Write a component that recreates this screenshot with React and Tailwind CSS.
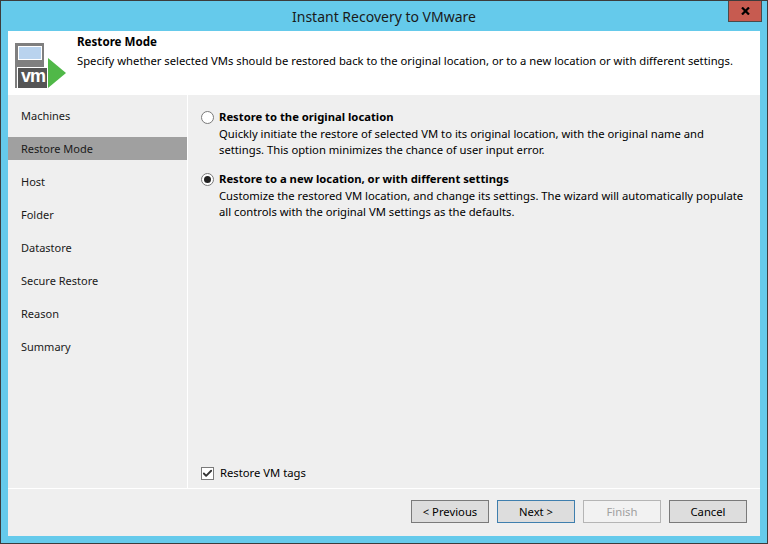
import { Check } from "lucide-react";

const steps = ["Machines", "Restore Mode", "Host", "Folder", "Datastore", "Secure Restore", "Reason", "Summary"];

function VmIcon() {
  return (
    <svg width="52" height="46" viewBox="0 0 52 46" className="shrink-0">
      <rect x="0" y="0" width="29" height="45" fill="#7f7f7f" />
      <rect x="3.5" y="3.5" width="23" height="13" fill="#b9d3ee" stroke="#fff" />
      <rect x="2.5" y="24.5" width="30" height="21" fill="#555" stroke="#fff" />
      <path d="M33 15 L51 30 L33 45 Z" fill="#50b848" />
      <text x="18" y="39" textAnchor="middle" fill="#fff" fontSize="18" fontWeight="700" letterSpacing="-1" fontFamily="Liberation Sans, sans-serif">vm</text>
    </svg>
  );
}

function RadioOption({ checked, title, children }) {
  return (
    <div className="flex">
      <span className="mt-[2px] mr-[5px] flex h-[13px] w-[13px] shrink-0 items-center justify-center rounded-full border border-[#7a7a7a] bg-white">
        {checked && <span className="h-[7px] w-[7px] rounded-full bg-[#222]" />}
      </span>
      <div>
        <div className="text-[11.25px] leading-[16px] font-bold text-black">{title}</div>
        <div className="mt-[1px] text-[11.25px] leading-[16px] text-black">{children}</div>
      </div>
    </div>
  );
}

function WizardButton({ children, primary, disabled }) {
  let tone = "border-[#7a7a7a] bg-[#dddddd] text-black";
  if (primary) tone = "border-[#3f7fae] bg-[#dddddd] text-black";
  if (disabled) tone = "border-[#b5b5b5] bg-[#f2f2f2] text-[#a0a0a0]";
  return (
    <button className={"h-[23px] w-[78px] border pt-[1px] text-[11.25px] leading-[20px] " + tone}>{children}</button>
  );
}

export default function App() {
  return (
    <div className="flex h-[544px] w-[768px] flex-col overflow-hidden border border-[#3c3c3c] bg-[#65caeb] font-['Noto_Sans',sans-serif]">
      <div className="relative flex h-[30px] shrink-0 items-center justify-center text-[14px] text-[#1a1a1a]">
        Instant Recovery to VMware
        <div className="absolute top-[-1px] right-[5px] flex h-[22px] w-[34px] items-center justify-center border border-[#4a4a4a] bg-[#c75b50]">
          <svg width="9" height="8" viewBox="0 0 9 8">
            <path d="M1 0.5 L8 7.5 M8 0.5 L1 7.5" stroke="#000" strokeWidth="2.2" fill="none" />
          </svg>
        </div>
      </div>

      <div className="mx-[7px] mb-[7px] flex min-h-0 flex-1 flex-col bg-[#efefef]">
        <div className="flex h-[64px] shrink-0 bg-white">
          <div className="pt-[12px] pl-[7px]">
            <VmIcon />
          </div>
          <div className="pt-[3px] pl-[10px]">
            <div className="text-[11.6px] leading-[16px] font-bold text-black">Restore Mode</div>
            <div className="mt-[3px] text-[11.25px] leading-[16px] text-black">
              Specify whether selected VMs should be restored back to the original location, or to a new location or with different settings.
            </div>
          </div>
        </div>

        <div className="flex min-h-0 flex-1 border-b border-white">
          <div className="flex w-[180px] shrink-0 flex-col gap-[10px] border-r border-white pt-[9px]">
            {steps.map((step) => (
              <div
                key={step}
                className={"h-[23px] pl-[13px] text-[11px] leading-[23px] text-[#1a1a1a] " + (step === "Restore Mode" ? "bg-[#a0a0a0]" : "")}
              >
                {step}
              </div>
            ))}
          </div>
          <div className="flex flex-1 flex-col pt-[14px] pr-[13px] pl-[13px]">
            <RadioOption title="Restore to the original location">
              Quickly initiate the restore of selected VM to its original location, with the original name and settings. This option minimizes the chance of user input error.
            </RadioOption>
            <div className="mt-[13px]">
              <RadioOption checked title="Restore to a new location, or with different settings">
                Customize the restored VM location, and change its settings. The wizard will automatically populate all controls with the original VM settings as the defaults.
              </RadioOption>
            </div>
            <div className="mt-auto mb-[7px] flex items-center">
              <span className="mr-[6px] flex h-[13px] w-[13px] items-center justify-center border border-[#7a7a7a] bg-white">
                <Check size={11} strokeWidth={4} className="text-[#333]" />
              </span>
              <span className="text-[11.25px] leading-[16px] text-black">Restore VM tags</span>
            </div>
          </div>
        </div>

        <div className="flex h-[47px] shrink-0 items-start justify-end gap-[8px] pt-[11px] pr-[13px]">
          <WizardButton>&lt; Previous</WizardButton>
          <WizardButton primary>Next &gt;</WizardButton>
          <WizardButton disabled>Finish</WizardButton>
          <WizardButton>Cancel</WizardButton>
        </div>
      </div>
    </div>
  );
}
